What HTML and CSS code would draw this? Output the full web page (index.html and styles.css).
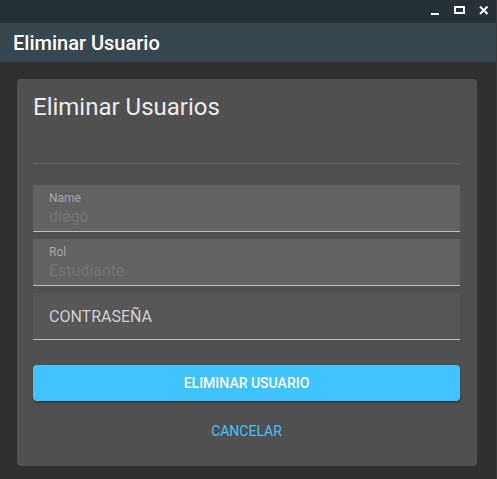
FILE: index.html
```html
<!DOCTYPE html>
<html lang="es">
<head>
<meta charset="utf-8">
<title>Eliminar Usuario</title>
<link rel="stylesheet" href="styles.css">
</head>
<body>
<div class="window">
  <div class="titlebar">
    <span class="tb-btn">
      <svg width="10" height="10" viewBox="0 0 10 10"><rect x="0" y="7" width="8" height="2" fill="#fff"/></svg>
    </span>
    <span class="tb-btn">
      <svg width="12" height="10" viewBox="0 0 12 10"><rect x="1" y="1" width="9" height="6" fill="none" stroke="#fff" stroke-width="2"/></svg>
    </span>
    <span class="tb-btn">
      <svg width="10" height="10" viewBox="0 0 10 10"><path d="M1 0.5 L8.5 8 M8.5 0.5 L1 8" stroke="#fff" stroke-width="2"/></svg>
    </span>
  </div>
  <header class="appbar">Eliminar Usuario</header>
  <main class="content">
    <section class="card">
      <h1 class="card-title">Eliminar Usuarios</h1>
      <div class="divider"></div>
      <div class="fields">
        <div class="field filled">
          <span class="label">Name</span>
          <span class="value">diego</span>
        </div>
        <div class="field filled">
          <span class="label">Rol</span>
          <span class="value">Estudiante</span>
        </div>
        <div class="field empty">
          <span class="placeholder">CONTRASEÑA</span>
        </div>
      </div>
      <button class="btn-primary">ELIMINAR USUARIO</button>
      <button class="btn-text">CANCELAR</button>
    </section>
  </main>
</div>
</body>
</html>
```
FILE: styles.css
```css
* { box-sizing: border-box; }
html, body { margin: 0; padding: 0; }
body {
  font-family: Roboto, "Liberation Sans", sans-serif;
  background: #303030;
  width: 497px;
  height: 479px;
  overflow: hidden;
}
.window {
  display: flex;
  flex-direction: column;
  height: 479px;
  border-right: 1px solid #3b3b3b;
}
.titlebar {
  height: 23px;
  background: #263238;
  display: flex;
  justify-content: flex-end;
  align-items: flex-start;
  padding: 6px 7px 0 0;
  gap: 13px;
}
.tb-btn { display: flex; height: 10px; }
.appbar {
  height: 39px;
  background: #37474f;
  color: #fff;
  font-size: 20px;
  font-weight: 500;
  padding-left: 13px;
  display: flex;
  align-items: center;
}
.content {
  flex: 1;
  padding: 17px 19px 13px 17px;
}
.card {
  background: #505050;
  border-radius: 4px;
  height: 387px;
  padding: 0 17px 0 16px;
  display: flex;
  flex-direction: column;
}
.card-title {
  margin: 0;
  padding-top: 14px;
  font-size: 24px;
  font-weight: 400;
  color: #ececec;
  line-height: 28px;
  height: 84px;
}
.divider {
  height: 1px;
  background: #666;
}
.fields {
  margin-top: 21px;
  display: flex;
  flex-direction: column;
  gap: 7px;
}
.field {
  height: 47px;
  border-bottom: 1px solid #bdbdbd;
  padding-left: 16px;
  display: flex;
  flex-direction: column;
}
.field.filled { background: #626262; }
.field.empty { background: #575757; justify-content: center; }
.label {
  font-size: 12px;
  color: #a8a8a8;
  line-height: 14px;
  margin-top: 6px;
}
.value {
  font-size: 16px;
  color: #747474;
  line-height: 20px;
  margin-top: 2px;
}
.placeholder {
  font-size: 16px;
  color: #d0d0d0;
  line-height: 20px;
  margin-top: 1px;
}
.btn-primary {
  margin-top: 25px;
  height: 36px;
  border: none;
  border-radius: 4px;
  background: #40c4ff;
  color: #fff;
  font-family: inherit;
  font-size: 14px;
  font-weight: 500;
  box-shadow: 0 2px 2px rgba(0,0,0,0.25);
  padding: 0;
}
.btn-text {
  margin-top: 12px;
  height: 36px;
  border: none;
  background: transparent;
  color: #40c4ff;
  font-family: inherit;
  font-size: 14px;
  font-weight: 400;
  align-self: center;
  padding: 0 8px;
}
```
